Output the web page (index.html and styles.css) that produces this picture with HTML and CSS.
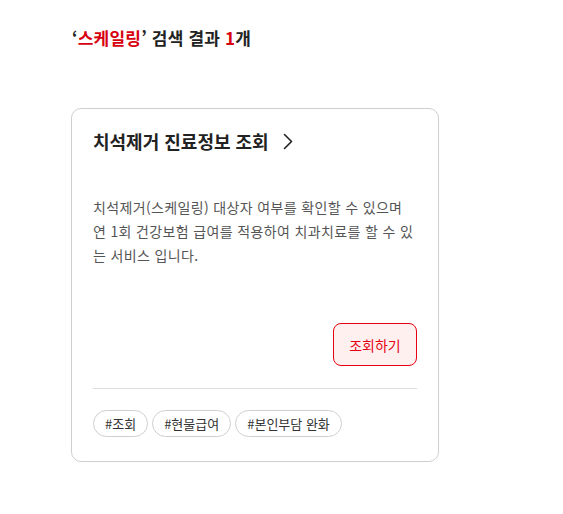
FILE: index.html
```html
<!DOCTYPE html>
<html lang="ko">
<head>
<meta charset="utf-8">
<link rel="stylesheet" href="styles.css">
</head>
<body>
<div class="page">
  <h1 class="result-title">‘<span class="hl">스케일링</span>’ 검색 결과 <span class="hl">1</span>개</h1>
  <div class="card">
    <div class="card-head">
      <span class="card-title">치석제거 진료정보 조회</span>
      <svg class="chev" width="12" height="17" viewBox="0 0 12 17"><path d="M2.5 1.5 L9.5 8.5 L2.5 15.5" fill="none" stroke="#222" stroke-width="1.6" stroke-linecap="round" stroke-linejoin="round"/></svg>
    </div>
    <p class="desc">치석제거(스케일링) 대상자 여부를 확인할 수 있으며 연 1회 건강보험 급여를 적용하여 치과치료를 할 수 있는 서비스 입니다.</p>
    <div class="actions">
      <button class="btn">조회하기</button>
    </div>
    <hr class="divider">
    <div class="tags">
      <span class="tag">#조회</span>
      <span class="tag">#현물급여</span>
      <span class="tag">#본인부담 완화</span>
    </div>
  </div>
</div>
</body>
</html>
```
FILE: styles.css
```css
* { box-sizing: border-box; }
body {
  margin: 0;
  background: #fff;
  font-family: "Noto Sans CJK KR", "Noto Sans", sans-serif;
  color: #222;
}
.page {
  padding: 25px 0 0 71px;
}
.result-title {
  margin: 0 0 57px 1px;
  font-size: 17px;
  line-height: 26px;
  font-weight: 700;
  letter-spacing: 0.2px;
  color: #222;
}
.hl { color: #d7000f; }
.card {
  width: 368px;
  border: 1px solid #cfcfcf;
  border-radius: 10px;
  padding: 20px 21px 24px;
}
.card-head {
  display: flex;
  align-items: center;
  gap: 13px;
  height: 24px;
}
.card-title {
  font-size: 18px;
  font-weight: 700;
  line-height: 24px;
  color: #222;
}
.chev { display: block; margin-top: 1px; }
.desc {
  margin: 42px 0 0;
  font-size: 14px;
  line-height: 24px;
  letter-spacing: 0.35px;
  word-break: break-all;
  color: #555;
}
.actions {
  display: flex;
  justify-content: flex-end;
  margin-top: 56px;
}
.btn {
  width: 84px;
  height: 43px;
  border: 1px solid #e60012;
  border-radius: 8px;
  background: #fff0f0;
  color: #e60012;
  font-family: inherit;
  font-size: 14px;
  padding: 0;
}
.divider {
  border: 0;
  border-top: 1px solid #ddd;
  margin: 22px 0 21px;
}
.tags {
  display: flex;
  gap: 4px;
}
.tag {
  height: 27px;
  padding: 0 11px;
  border: 1px solid #cfcfcf;
  border-radius: 14px;
  font-size: 13px;
  line-height: 25px;
  color: #333;
}
```
